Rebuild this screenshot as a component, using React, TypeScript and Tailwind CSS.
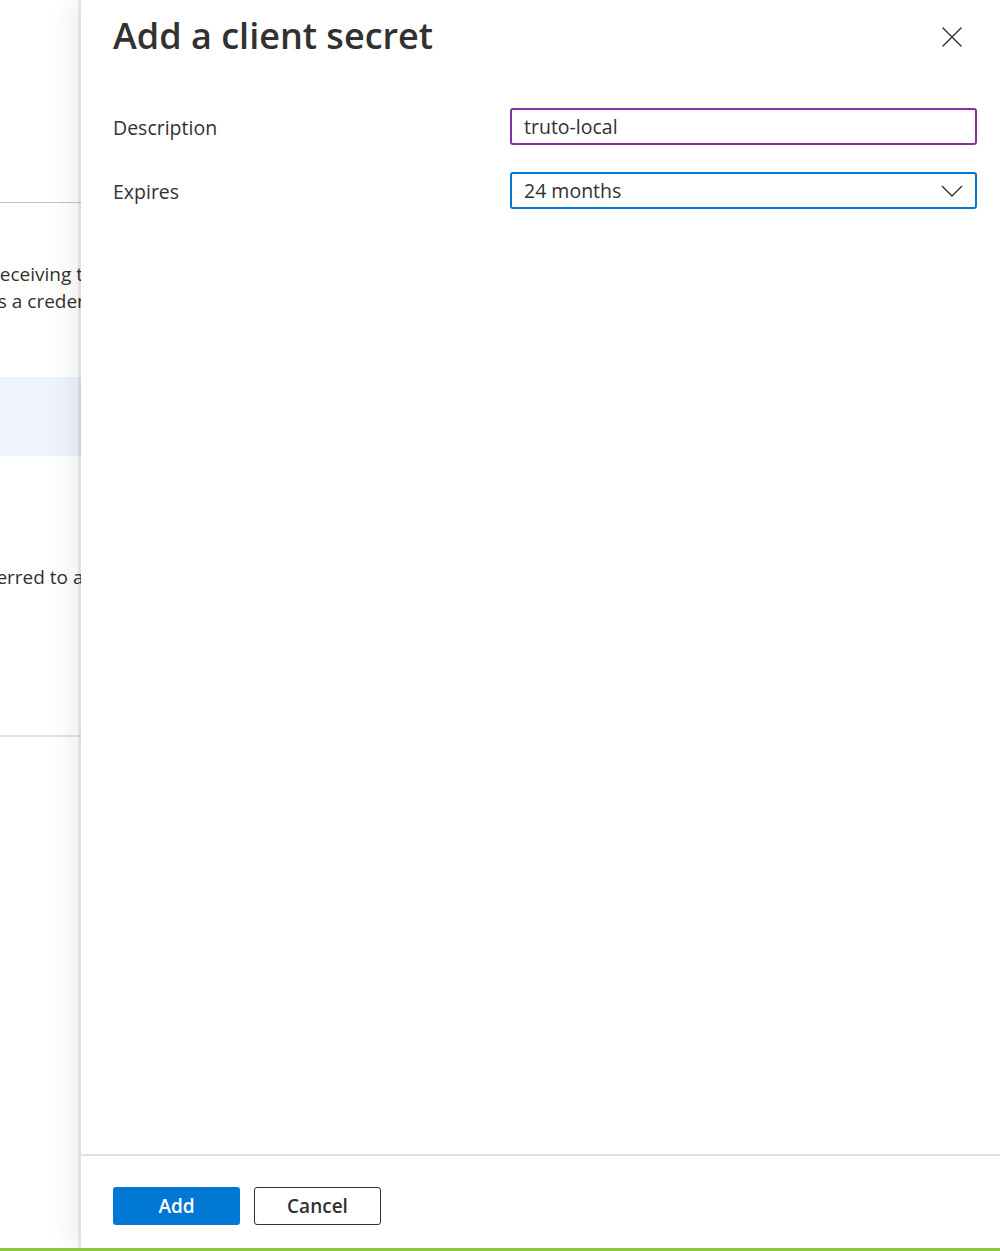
const font = { fontFamily: '"Open Sans", "Noto Sans", Arial, sans-serif' };

function BackgroundPage() {
  return (
    <div className="w-[81px] h-full overflow-hidden text-[19px] text-[#323130] bg-white">
      <div className="h-[202px]" />
      <div className="h-px bg-[#cdbfdc]" />
      <div className="h-[58px]" />
      <div className="whitespace-nowrap ml-[-8px] leading-[27px]">receiving tokens</div>
      <div className="whitespace-nowrap ml-[-7px] leading-[27px]">is a credential</div>
      <div className="h-[62px]" />
      <div className="h-[79px] bg-[#eff3fa]" />
      <div className="h-[108px]" />
      <div className="whitespace-nowrap ml-[-10px] leading-[27px]">ferred to another</div>
      <div className="h-[144px]" />
      <div className="h-[2px] bg-[#e3e3e3]" />
    </div>
  );
}

function CloseIcon() {
  return (
    <svg width="20" height="20" viewBox="0 0 20 20" fill="none" stroke="#323130" strokeWidth="1.4">
      <path d="M0.5 0.5 L19.5 19.5 M19.5 0.5 L0.5 19.5" />
    </svg>
  );
}

function Chevron() {
  return (
    <svg width="22" height="12" viewBox="0 0 22 12" fill="none" stroke="#323130" strokeWidth="1.4">
      <path d="M1 1 L11 11 L21 1" />
    </svg>
  );
}

export default function App() {
  return (
    <div className="relative w-[1000px] h-[1251px] overflow-hidden bg-white" style={font}>
      <BackgroundPage />

      {/* Side panel */}
      <div className="absolute top-0 bottom-[3px] left-[81px] right-0 bg-white flex flex-col shadow-[-3px_0_0_rgba(0,0,0,0.08),-12px_0_22px_rgba(0,0,0,0.06)]">
        <div className="flex items-start justify-between pl-[32px] pr-[38px] pt-[10px]">
          <h1 className="text-[36px] font-semibold text-[#323130] leading-[52px]">
            Add a client secret
          </h1>
          <button className="mt-[17px]">
            <CloseIcon />
          </button>
        </div>

        <div className="flex-1 pl-[32px] pr-[23px] pt-[46px] flex flex-col gap-[27px]">
          <div className="flex items-center">
            <label className="w-[397px] text-[19.5px] text-[#323130] pt-[3px]">Description</label>
            <div className="flex-1 h-[37px] border-[2px] border-[#8431a6] rounded-[3px] flex items-center px-[12px] text-[19.5px] text-[#323130]">
              truto-local
            </div>
          </div>
          <div className="flex items-center">
            <label className="w-[397px] text-[19.5px] text-[#323130] pt-[2px]">Expires</label>
            <div className="flex-1 h-[37px] border-[2px] border-[#0078d4] rounded-[3px] flex items-center justify-between pl-[12px] pr-[12px] text-[19.5px] text-[#323130]">
              <span>24 months</span>
              <Chevron />
            </div>
          </div>
        </div>

        <div className="border-t-2 border-[#e1e1e1] pl-[32px] pt-[31px] pb-[23px] flex gap-[14px]">
          <button className="w-[127px] h-[38px] bg-[#0078d4] rounded-[3px] text-white text-[19px] font-semibold">
            Add
          </button>
          <button className="w-[127px] h-[38px] border-[1.5px] border-[#323130] rounded-[3px] text-[#323130] text-[19px] font-semibold">
            Cancel
          </button>
        </div>
      </div>

      <div className="absolute left-0 right-0 bottom-0 h-[3px] bg-[#8cc63e]" />
    </div>
  );
}
